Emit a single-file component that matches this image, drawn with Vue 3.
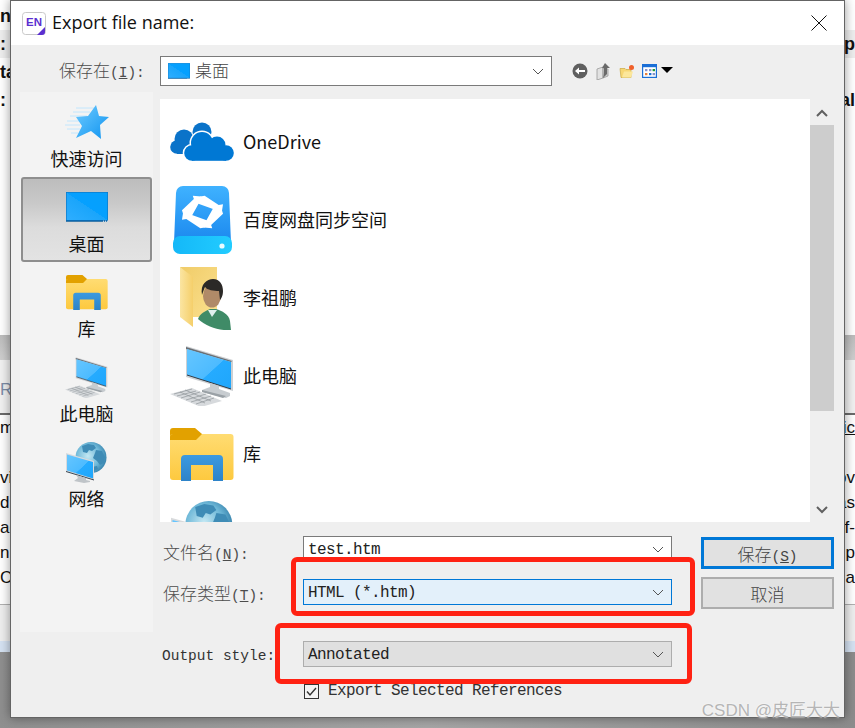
<template>
  <div class="page">
    <!-- the window behind the dialog, only its edges are visible -->
    <div class="behind">
      <div class="behind__top">
        <div v-for="row in topRows" :key="row.left" class="behind__row" :class="{ 'behind__row--shade': row.shade }">
          <span>{{ row.left }}</span><span>{{ row.right }}</span>
        </div>
      </div>
      <div class="behind__band"></div>
      <div class="behind__tabs"><span>Re</span></div>
      <div class="behind__text">
        <div v-for="(row, i) in textRows" :key="i" class="behind__line">
          <span>{{ row.left }}</span><span :class="{ 'behind__link': row.link }">{{ row.right }}</span>
        </div>
      </div>
      <div class="behind__foot"></div>
      <div class="behind__strip"></div>
      <div class="behind__desk"></div>
    </div>

    <svg class="defs" aria-hidden="true">
      <defs>
        <linearGradient id="gDesk" x1="0" y1="1" x2="1" y2="0">
          <stop offset="0" stop-color="#2eaeff" /><stop offset="0.5" stop-color="#1aa5fb" /><stop offset="0.5" stop-color="#05a0ff" /><stop offset="1" stop-color="#05a0fb" />
        </linearGradient>
        <linearGradient id="gFolder" x1="0" y1="0" x2="0" y2="1">
          <stop offset="0" stop-color="#ffdc72" /><stop offset="1" stop-color="#fdc93f" />
        </linearGradient>
        <linearGradient id="gArch" x1="0" y1="0" x2="0" y2="1">
          <stop offset="0" stop-color="#3c9ae0" /><stop offset="1" stop-color="#2d83c8" />
        </linearGradient>
        <linearGradient id="gScreen" x1="0" y1="0" x2="1" y2="1">
          <stop offset="0" stop-color="#66c6ff" /><stop offset="0.55" stop-color="#4dbbff" /><stop offset="0.56" stop-color="#25abff" /><stop offset="1" stop-color="#1fa6fb" />
        </linearGradient>
        <radialGradient id="gGlobe" cx="0.4" cy="0.45" r="0.65">
          <stop offset="0" stop-color="#c4e8f3" /><stop offset="0.6" stop-color="#6eb8d8" /><stop offset="1" stop-color="#2f7ba6" />
        </radialGradient>
        <linearGradient id="gStar" x1="0" y1="0" x2="1" y2="1">
          <stop offset="0" stop-color="#6fcbff" /><stop offset="1" stop-color="#0e93f0" />
        </linearGradient>
        <linearGradient id="gDrive" x1="0" y1="0" x2="0" y2="1">
          <stop offset="0" stop-color="#3fb2ff" /><stop offset="1" stop-color="#1b88ee" />
        </linearGradient>
        <linearGradient id="gDriveBase" x1="0" y1="0" x2="1" y2="0">
          <stop offset="0" stop-color="#14b8f8" /><stop offset="1" stop-color="#22ccff" />
        </linearGradient>
        <linearGradient id="gDoor" x1="0" y1="0" x2="1" y2="0">
          <stop offset="0" stop-color="#fbe5a2" /><stop offset="1" stop-color="#f5cf6a" />
        </linearGradient>
        <linearGradient id="gBack" x1="0" y1="0" x2="1" y2="1">
          <stop offset="0" stop-color="#f0cc68" /><stop offset="1" stop-color="#fbe08e" />
        </linearGradient>
      </defs>

      <symbol id="star" viewBox="0 0 45 36">
        <g stroke="#b5e2ff" stroke-width="0.8" fill="none">
          <path d="M12 4h18M9 8h17M6 12h17M3 17h13M1 21h15M3 25h13M7 29h7" />
        </g>
        <path d="M32 1l3 11 10 1-9 8 1 14-10-8-15 7 6-12-6-9 12-1z" fill="url(#gStar)" />
      </symbol>

      <symbol id="desktop" viewBox="0 0 42 30">
        <rect x="0" y="0" width="42" height="29" fill="#0d79c8" />
        <rect x="0.7" y="0.7" width="40.6" height="27.3" fill="url(#gDesk)" />
        <path d="M0 28.6h42v1.2H0z" fill="#0b5f9e" />
        <path d="M37 29.2h5" stroke="#fff" stroke-width="1" stroke-dasharray="1 1" />
      </symbol>

      <symbol id="library" viewBox="0 0 64 53">
        <path d="M0 3a3 3 0 0 1 3-3h22l7 6v6H0z" fill="#e2a100" />
        <rect x="0" y="6" width="63.5" height="46" rx="3" fill="url(#gFolder)" />
        <path d="M0 12V9a3 3 0 0 1 3-3h29l-6 6z" fill="#e2a100" />
        <path d="M11 53V31a4 4 0 0 1 4-4h34a4 4 0 0 1 4 4v22H43V37H21v16z" fill="url(#gArch)" />
      </symbol>

      <symbol id="computer" viewBox="0 0 64 60">
        <path d="M16 0l47 14v31L16 31z" fill="#cdd0d3" />
        <path d="M16 1l46 14-1 1-45-13z" fill="#6b6f74" />
        <path d="M17 3l44 13v27L17 29z" fill="url(#gScreen)" />
        <path d="M17 29l44 14" stroke="#333b44" stroke-width="1" />
        <path d="M40 37l9 3v3l11 4v3l-4 2-24-6v-2l8-3z" fill="#c7ccd0" />
        <path d="M32 44l24 6-3 2-21-6z" fill="#9aa1a6" />
        <path d="M0 48l22-6 30 13-21 6z" fill="#d7dadd" />
        <path d="M4 48l18-5M7 50l19-5M11 52l19-6M16 54l20-6M21 56l20-6M26 58l18-6M10 46l25 11M15 44l26 11" stroke="#8f959a" stroke-width="0.7" fill="none" />
      </symbol>

      <symbol id="network" viewBox="0 0 41 41">
        <circle cx="25" cy="15.5" r="15.5" fill="url(#gGlobe)" />
        <path d="M16 4l6-2 6 1 2 3-4 3-3-1-2 3-4-1zM30 8l6 1 3 6-1 6-4 2-3-4-4-3 2-5zM26 25l5-1 1 3-4 2z" fill="#3f8cb6" />
        <path d="M0 11l28 8v19L0 29.5z" fill="#d8dadc" />
        <path d="M1 12.5l26 7.5v16.5L1 28.5z" fill="url(#gScreen)" />
        <path d="M0 29.5l28 8.5" stroke="#3c4650" stroke-width="1" />
        <path d="M10 33l10 3v2l4 1v1l-6 1-10-2 4-3z" fill="#bfc4c8" />
      </symbol>

      <symbol id="onedrive" viewBox="0 0 64 40">
        <g fill="#0a73c9">
          <circle cx="32" cy="10" r="9.5" />
          <circle cx="14" cy="17" r="9.5" />
          <circle cx="7" cy="25" r="6.8" />
          <rect x="7" y="15" width="30" height="16" />
          <rect x="7" y="24" width="18" height="8" />
        </g>
        <g fill="#0078d4" stroke="#fff" stroke-width="3">
          <circle cx="32" cy="21" r="11" />
          <circle cx="47" cy="23" r="8.5" />
          <circle cx="56" cy="31" r="7.5" />
          <circle cx="22" cy="31" r="7.8" />
        </g>
        <g fill="#0078d4">
          <circle cx="32" cy="21" r="11" />
          <circle cx="47" cy="23" r="8.5" />
          <circle cx="56" cy="31" r="7.8" />
          <circle cx="22" cy="31" r="7.8" />
          <rect x="22" y="24" width="34" height="14.8" />
        </g>
      </symbol>

      <symbol id="baidu" viewBox="0 0 59 68">
        <path d="M3 7a7 7 0 0 1 7-7h39a7 7 0 0 1 7 7l2 50H1z" fill="url(#gDrive)" />
        <path d="M0 57a7 7 0 0 1 7-7h45a7 7 0 0 1 7 7v4a7 7 0 0 1-7 7H7a7 7 0 0 1-7-7z" fill="url(#gDriveBase)" />
        <circle cx="49" cy="60" r="2.6" fill="#e8fbff" />
        <g fill="#fff" transform="translate(29.5 26) scale(1.08 0.86)">
          <path d="M-2-18l4-1 13 11 4-1-1 8-8-1 1-1L-7-11z" />
          <path d="M-2-18l4-1 13 11 4-1-1 8-8-1 1-1L-7-11z" transform="rotate(90)" />
          <path d="M-2-18l4-1 13 11 4-1-1 8-8-1 1-1L-7-11z" transform="rotate(180)" />
          <path d="M-2-18l4-1 13 11 4-1-1 8-8-1 1-1L-7-11z" transform="rotate(270)" />
        </g>
      </symbol>

      <symbol id="userfolder" viewBox="0 0 53 63">
        <path d="M1 0h37v50H14z" fill="url(#gBack)" />
        <path d="M1 0l13 10v50L1 50z" fill="url(#gDoor)" />
        <path d="M19 52c2-6 8-8 12-10h6c6 2 13 5 14 12l1 9c-12 1-24-3-33-11z" fill="#3f8b67" />
        <path d="M29 43l4 7 5-7z" fill="#dff0ee" />
        <ellipse cx="33" cy="29" rx="9" ry="11.5" fill="#b08a68" />
        <path d="M23 28c-2-11 5-16 11-16 7 0 10 6 10 12 0 5-2 8-3 9l-1-9c-5 0-12-1-14-4-1 2-2 5-3 8z" fill="#2b2927" />
      </symbol>

      <symbol id="back" viewBox="0 0 16 16">
        <circle cx="8" cy="8" r="7.5" fill="#5f5f5f" />
        <path d="M3 8l4-3.5V7h6v2H7v2.5z" fill="#fff" />
      </symbol>
      <symbol id="up" viewBox="0 0 14 17">
        <path d="M1 6l6-2v11l-6 2z" fill="#e2e2e2" stroke="#9a9a9a" stroke-width="0.8" />
        <path d="M7 5l5 1v7l-5 2z" fill="#cfcfcf" stroke="#9a9a9a" stroke-width="0.8" />
        <path d="M9 0l5 5h-3v6l-4 4c1-3 1-6 1-10H6z" fill="#6a6a6a" />
      </symbol>
      <symbol id="newfolder" viewBox="0 0 16 14">
        <path d="M1 4h5l1 1h5v8H2z" fill="#f7d774" stroke="#c9a740" stroke-width="0.7" />
        <path d="M3 13l2-6h9l-2 6z" fill="#fce79b" />
        <circle cx="12.5" cy="3" r="2.5" fill="#f0602a" />
      </symbol>
      <symbol id="views" viewBox="0 0 15 14">
        <rect x="0.6" y="0.6" width="13.8" height="12.8" fill="#fff" stroke="#1a6fd6" stroke-width="1.2" />
        <rect x="0.6" y="0.6" width="13.8" height="2.6" fill="#1a6fd6" />
        <rect x="3" y="5" width="2.4" height="2.2" fill="#8a93c8" />
        <rect x="7" y="5" width="2.4" height="2.2" fill="#8a93c8" />
        <rect x="10.6" y="5" width="2.4" height="2.2" fill="#1e9a3a" />
        <rect x="3" y="9" width="2.4" height="2.2" fill="#e8803a" />
        <rect x="7" y="9" width="2.4" height="2.2" fill="#1a6fd6" />
        <rect x="10.6" y="9" width="2.4" height="2.2" fill="#8a93c8" />
      </symbol>
      <symbol id="chevron" viewBox="0 0 12 7">
        <path d="M1 1l5 5 5-5" fill="none" stroke="#555" stroke-width="1" />
      </symbol>
    </svg>

    <div class="dialog">
      <header class="titlebar">
        <svg class="titlebar__logo" viewBox="0 0 24 23">
          <rect x="0.5" y="0.5" width="23" height="22" rx="3" fill="#fff" stroke="#c9c9c9" />
          <text x="12" y="13.5" text-anchor="middle" class="titlebar__en">EN</text>
          <path d="M23 15v5a3 3 0 0 1-3 3h-5z" fill="#5b2fd0" />
        </svg>
        <span class="titlebar__text">Export file name:</span>
        <svg class="titlebar__close" viewBox="0 0 16 16">
          <path d="M0.5 0.5l15 15M15.5 0.5l-15 15" stroke="#111" stroke-width="1" />
        </svg>
      </header>

      <div class="body">
        <div class="toolbar">
          <span class="toolbar__label">保存在<span class="latin">(<u>I</u>):</span></span>
          <div class="location">
            <svg class="location__icon"><use href="#desktop" /></svg>
            <span class="location__text">桌面</span>
            <svg class="chevron"><use href="#chevron" /></svg>
          </div>
          <div class="toolbar__icons">
            <svg class="tool tool--back"><use href="#back" /></svg>
            <svg class="tool tool--up"><use href="#up" /></svg>
            <svg class="tool tool--new"><use href="#newfolder" /></svg>
            <svg class="tool tool--views"><use href="#views" /></svg>
            <span class="tool__caret"></span>
          </div>
        </div>

        <div class="main">
          <nav class="places">
            <div
              v-for="place in places"
              :key="place.label"
              class="place"
              :class="{ 'place--active': place.active }"
            >
              <div class="place__icon">
                <svg :class="'place__svg--' + place.icon"><use :href="'#' + place.icon" /></svg>
              </div>
              <span class="place__label">{{ place.label }}</span>
            </div>
          </nav>

          <div class="content">
            <div class="browser">
              <div class="files">
                <div v-for="file in files" :key="file.name" class="file">
                  <div class="file__icon">
                    <svg :class="'file__svg--' + file.icon"><use :href="'#' + file.icon" /></svg>
                  </div>
                  <span class="file__name">{{ file.name }}</span>
                </div>
              </div>
              <div class="scrollbar">
                <svg class="scrollbar__arrow" viewBox="0 0 12 8"><path d="M1 7l5-5 5 5" fill="none" stroke="#606060" stroke-width="2" /></svg>
                <div class="scrollbar__track"><div class="scrollbar__thumb"></div></div>
                <svg class="scrollbar__arrow" viewBox="0 0 12 8"><path d="M1 1l5 5 5-5" fill="none" stroke="#606060" stroke-width="2" /></svg>
              </div>
            </div>

            <div class="form">
              <div class="fields">
                <label class="field-label field-label--name">文件名<span class="latin">(<u>N</u>):</span></label>
                <div class="combo combo--white">
                  <span class="combo__text">test.htm</span>
                  <svg class="chevron"><use href="#chevron" /></svg>
                </div>
                <label class="field-label">保存类型<span class="latin">(<u>T</u>):</span></label>
                <div class="combo combo--focus">
                  <span class="combo__text">HTML (*.htm)</span>
                  <svg class="chevron"><use href="#chevron" /></svg>
                </div>
                <label class="field-label field-label--mono">Output style:</label>
                <div class="combo combo--gray">
                  <span class="combo__text">Annotated</span>
                  <svg class="chevron"><use href="#chevron" /></svg>
                </div>
                <span></span>
                <div class="check">
                  <svg class="check__box" viewBox="0 0 15 15">
                    <rect x="0.5" y="0.5" width="14" height="14" fill="#f4f4f4" stroke="#333" />
                    <path d="M3 7.5l3 3.5 6-7" fill="none" stroke="#333" stroke-width="1.4" />
                  </svg>
                  <span>Export Selected References</span>
                </div>
              </div>
              <div class="actions">
                <button class="btn btn--default">保存<span class="latin">(<u>S</u>)</span></button>
                <button class="btn">取消</button>
              </div>
            </div>
          </div>
        </div>
      </div>
    </div>

    <!-- annotation boxes drawn over the screenshot -->
    <div class="mark mark--type"></div>
    <div class="mark mark--style"></div>
    <div class="watermark">CSDN @皮匠大大</div>
  </div>
</template>

<script setup>
const topRows = [
  { left: 'n', right: '', shade: false },
  { left: ': I', right: 'p', shade: true },
  { left: 'ta', right: '', shade: false },
  { left: ': V', right: 'al', shade: false },
]

const textRows = [
  { left: 'm', right: 'tic', link: true },
  { left: '', right: '' },
  { left: 'vi', right: 'ov' },
  { left: 'd', right: 'as' },
  { left: 'ac', right: 'f-' },
  { left: 'n', right: 'p' },
  { left: 'C', right: 'a' },
]

const places = [
  { label: '快速访问', icon: 'star' },
  { label: '桌面', icon: 'desktop', active: true },
  { label: '库', icon: 'library' },
  { label: '此电脑', icon: 'computer' },
  { label: '网络', icon: 'network' },
]

const files = [
  { name: 'OneDrive', icon: 'onedrive' },
  { name: '百度网盘同步空间', icon: 'baidu' },
  { name: '李祖鹏', icon: 'userfolder' },
  { name: '此电脑', icon: 'computer' },
  { name: '库', icon: 'library' },
  { name: '', icon: 'network' },
]
</script>

<style>
html,
body {
  margin: 0;
  overflow: hidden;
}
</style>

<style scoped>
.page {
  position: relative;
  width: 855px;
  height: 728px;
  overflow: hidden;
  font-family: "Noto Sans CJK SC", sans-serif;
  background: #fff;
}

.defs {
  position: absolute;
  width: 0;
  height: 0;
}

.latin {
  font-family: "Liberation Mono", monospace;
  font-size: 14.5px;
  font-weight: 400;
}

.behind {
  display: flex;
  flex-direction: column;
  height: 728px;
  font-family: "Liberation Sans", sans-serif;
  color: #111;
}

.behind__top {
  height: 335px;
  padding-top: 2px;
  box-sizing: border-box;
}

.behind__row {
  display: flex;
  justify-content: space-between;
  height: 28px;
  line-height: 28px;
  font-size: 18px;
  font-weight: 700;
}

.behind__row--shade {
  background: #eeeeee;
}

.behind__band {
  height: 25px;
  background: linear-gradient(#bcbcbc, #cfcfcf);
}

.behind__tabs {
  height: 55px;
  line-height: 60px;
  font-size: 17px;
  color: #7c8ca6;
  background: #f1f1f1;
  border-bottom: 2px solid #6b6b6b;
  box-sizing: border-box;
}

.behind__text {
  height: 189px;
  background: #fff;
  font-size: 17px;
}

.behind__line {
  display: flex;
  justify-content: space-between;
  height: 25px;
  line-height: 25px;
}

.behind__link {
  text-decoration: underline;
}

.behind__foot {
  height: 37px;
  background: #eeeeee;
  border-top: 1px solid #b0b0b0;
  box-sizing: border-box;
}

.behind__strip {
  height: 11px;
  background: #d5e2f2;
}

.behind__desk {
  flex: 1;
  background: linear-gradient(90deg, #8f8f8f, #a6a6a6 50%, #8c8c8c);
}

.dialog {
  position: absolute;
  left: 10px;
  top: 0;
  width: 835px;
  height: 718px;
  display: flex;
  flex-direction: column;
  box-sizing: border-box;
  border: 1px solid #646464;
  background: #efefef;
  box-shadow: 0 0 10px rgba(0, 0, 0, 0.4);
}

.titlebar {
  display: flex;
  align-items: center;
  flex: none;
  height: 44px;
  padding: 0 17px 0 11px;
  background: #fff;
}

.titlebar__logo {
  width: 24px;
  height: 23px;
  margin-right: 6px;
}

.titlebar__en {
  font: 700 11.5px "Liberation Sans", sans-serif;
  fill: #5b2fd0;
}

.titlebar__text {
  flex: 1;
  margin-top: -2px;
  font: 18px "Open Sans", sans-serif;
  color: #111;
}

.titlebar__close {
  width: 16px;
  height: 16px;
}

.body {
  flex: 1;
  display: flex;
  flex-direction: column;
  padding-top: 11px;
}

.toolbar {
  display: flex;
  align-items: center;
  height: 30px;
  flex: none;
}

.toolbar__label {
  width: 149px;
  box-sizing: border-box;
  padding: 0 0 3px 48px;
  font-size: 17px;
  color: #4c4c4c;
  font-weight: 300;
}

.location {
  display: flex;
  align-items: center;
  width: 392px;
  height: 30px;
  box-sizing: border-box;
  margin-right: 20px;
  padding-left: 7px;
  border: 1px solid #7a7a7a;
  background: #fff;
}

.location__icon {
  width: 22px;
  height: 16px;
  margin-right: 5px;
}

.location__text {
  flex: 1;
  padding-bottom: 3px;
  font-size: 17px;
  font-weight: 300;
  color: #444;
}

.chevron {
  flex: none;
  width: 12px;
  height: 7px;
  margin-right: 7px;
}

.toolbar__icons {
  display: flex;
  align-items: center;
}

.tool--back {
  width: 16px;
  height: 16px;
  margin-right: 8px;
}

.tool--up {
  width: 14px;
  height: 17px;
  margin-right: 9px;
}

.tool--new {
  width: 16px;
  height: 15px;
  margin-right: 7px;
}

.tool--views {
  width: 15px;
  height: 14px;
  margin-right: 4px;
}

.tool__caret {
  width: 0;
  height: 0;
  border-left: 6px solid transparent;
  border-right: 6px solid transparent;
  border-top: 6px solid #000;
  margin-top: -3px;
}

.main {
  flex: 1;
  display: flex;
  align-items: flex-start;
  margin-top: 6px;
  padding-left: 9px;
}

.places {
  flex: none;
  width: 133px;
  height: 540px;
  background: #f3f3f3;
  margin-right: 7px;
}

.place {
  display: flex;
  flex-direction: column;
  align-items: center;
  height: 85px;
  box-sizing: border-box;
  padding-top: 6px;
  margin: 0 1px;
}

.place--active {
  border: 2px solid #8e8e8e;
  border-radius: 3px;
  padding-top: 4px;
  background: linear-gradient(#bdbdbd, #c9c9c9 30%, #dcdcdc 60%, #e3e3e3);
}

.place__icon {
  display: flex;
  align-items: center;
  justify-content: center;
  height: 48px;
}

.place__svg--star {
  width: 45px;
  height: 36px;
}

.place__svg--desktop {
  width: 42px;
  height: 30px;
}

.place__svg--library {
  width: 42px;
  height: 35px;
}

.place__svg--computer {
  width: 43px;
  height: 41px;
}

.place__svg--network {
  width: 41px;
  height: 41px;
}

.place__label {
  margin-top: -1px;
  font-size: 18px;
  line-height: 26px;
  color: #111;
}

.content {
  flex: 1;
  min-width: 0;
  margin-top: 7px;
}

.browser {
  display: flex;
  height: 423px;
}

.files {
  width: 650px;
  flex: none;
  box-sizing: border-box;
  padding-top: 4px;
  background: #fff;
  overflow: hidden;
}

.file {
  display: flex;
  align-items: center;
  height: 78px;
  padding-left: 10px;
}

.file__icon {
  display: flex;
  align-items: center;
  justify-content: center;
  flex: none;
  width: 64px;
  height: 78px;
  margin-right: 9px;
}

.file__svg--onedrive {
  width: 64px;
  height: 40px;
}

.file__svg--baidu {
  width: 59px;
  height: 68px;
}

.file__svg--userfolder {
  width: 53px;
  height: 63px;
  margin-left: 6px;
}

.file__svg--computer {
  width: 64px;
  height: 60px;
}

.file__svg--library {
  width: 64px;
  height: 53px;
}

.file__svg--network {
  width: 62px;
  height: 62px;
}

.file__name {
  padding-bottom: 2px;
  font-size: 18px;
  color: #111;
}

.scrollbar {
  width: 24px;
  display: flex;
  flex-direction: column;
  align-items: center;
}

.scrollbar__arrow {
  flex: none;
  width: 12px;
  height: 8px;
  margin: 10px 0 8px;
}

.scrollbar__track {
  flex: 1;
  align-self: stretch;
}

.scrollbar__thumb {
  height: 286px;
  background: #cdcdcd;
}

.form {
  display: flex;
  padding-top: 14px;
}

.fields {
  display: grid;
  grid-template-columns: 143px 369px;
  grid-template-rows: 26px 26px 45px 15px;
  row-gap: 17px;
  width: 541px;
}

.field-label {
  align-self: center;
  padding-left: 3px;
  font-size: 17px;
  font-weight: 300;
  color: #4c4c4c;
}

.field-label--name {
  margin-top: 5px;
}

.field-label--mono {
  align-self: end;
  padding: 0 0 3px 2px;
  font: 14.5px "Liberation Mono", monospace;
  color: #333;
}

.combo {
  display: flex;
  align-items: center;
  justify-content: space-between;
  height: 26px;
  box-sizing: border-box;
  padding-left: 4px;
  font: 16px "Liberation Mono", monospace;
  letter-spacing: -0.6px;
  color: #222;
  border: 1px solid #7a7a7a;
}

.combo__text {
  padding-top: 2px;
}

.combo--white {
  background: #fff;
}

.combo--focus {
  background: #e3f0fa;
  border-color: #0078d7;
}

.combo--gray {
  align-self: end;
  background: #e0e0e0;
  border-color: #adadad;
}

.check {
  display: flex;
  align-items: center;
  gap: 9px;
  margin: -1px 0 0 1px;
  font: 16px "Liberation Mono", monospace;
  letter-spacing: -0.6px;
  color: #333;
}

.check__box {
  flex: none;
  width: 15px;
  height: 15px;
}

.actions {
  display: flex;
  flex-direction: column;
  gap: 8px;
  margin-top: 1px;
  width: 133px;
}

.btn {
  height: 32px;
  padding: 0;
  box-sizing: border-box;
  border: 2px solid #adadad;
  background: #e1e1e1;
  font: 300 17px "Noto Sans CJK SC", sans-serif;
  color: #444;
}

.btn--default {
  border: 3px solid #0078d7;
}

.mark {
  position: absolute;
  box-sizing: border-box;
  border: 5px solid #ff2213;
  border-radius: 6px;
}

.mark--type {
  left: 291px;
  top: 557px;
  width: 404px;
  height: 59px;
}

.mark--style {
  left: 275px;
  top: 623px;
  width: 417px;
  height: 61px;
}

.watermark {
  position: absolute;
  right: 15px;
  top: 696px;
  font: 17px "Liberation Sans", "Noto Sans CJK SC", sans-serif;
  color: #b5b5b5;
  text-shadow: 0 0 2px #fff;
}
</style>
